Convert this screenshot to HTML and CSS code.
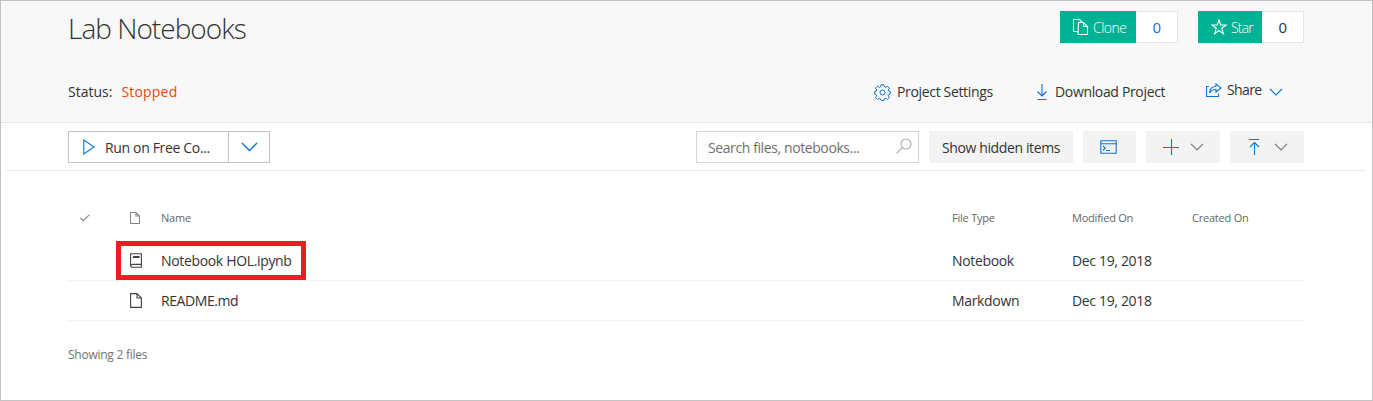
FILE: index.html
```html
<!DOCTYPE html>
<html lang="en">
<head>
<meta charset="utf-8">
<title>Lab Notebooks</title>
<link rel="stylesheet" href="styles.css">
</head>
<body>
<div class="page">
  <header class="header">
    <div class="title-row">
      <h1 class="title"><span>Lab Notebooks</span></h1>
      <div class="counter clone">
        <button class="counter-action"><svg width="16" height="17" viewBox="0 0 16 17"><path d="M4.500 12.500h-4v-12h6l3 3M5.500 3.500h5l4 4v8h-9.500zM10.500 3.500v4h4"/></svg><span>Clone</span></button>
        <span class="counter-value link">0</span>
      </div>
      <div class="counter star">
        <button class="counter-action"><svg width="16" height="16" viewBox="0 0 16 16"><path d="M8 1l1.700 5h5.300l-4.200 3.300 1.600 5.500L8 11.500l-4.400 3.300 1.600-5.500L1 6h5.300z"/></svg><span>Star</span></button>
        <span class="counter-value">0</span>
      </div>
    </div>
    <div class="status-row">
      <div class="status"><span class="status-label">Status:</span><span class="status-value">Stopped</span></div>
      <a class="action settings"><svg width="17" height="17" viewBox="0 0 17 17"><path d="M7 .8h3l.4 2 1.300.6 1.700-1.200 2 2-1.200 1.700.6 1.300 1.500.3v2.600l-1.500.4-.6 1.300 1.200 1.700-2 2-1.700-1.200-1.300.6-.4 1.500H7l-.4-1.500-1.300-.6-1.700 1.200-2-2 1.200-1.700-.6-1.300-1.500-.4V7.500l1.500-.3.600-1.300-1.200-1.700 2-2 1.700 1.200 1.300-.6z"/><circle cx="8.500" cy="8.500" r="2.500"/></svg><span>Project Settings</span></a>
      <a class="action download"><svg width="12" height="16" viewBox="0 0 12 16"><path d="M6 0v12M1.500 7.500L6 12l4.500-4.500M1.500 15.500h9"/></svg><span>Download Project</span></a>
      <a class="action share"><svg width="16" height="14" viewBox="0 0 16 14"><path d="M3 3.500H.5v10h12v-3M10 .8L15 5l-5 4V6.500C7 6.500 5 7.500 3.500 10c.3-3.800 2.500-6.400 6.500-6.700z"/></svg><span>Share</span><svg class="share-chevron" width="14" height="9" viewBox="0 0 14 9"><path d="M1 1l6 6 6-6"/></svg></a>
    </div>
  </header>

  <div class="toolbar">
    <div class="run">
      <button class="run-main"><svg width="12" height="16" viewBox="0 0 12 16"><path d="M.8 1v14L11 8z"/></svg><span>Run on Free Co...</span></button>
      <button class="run-menu"><svg width="17" height="10" viewBox="0 0 17 10"><path d="M1 1l7.500 7.500L16 1"/></svg></button>
    </div>
    <div class="search"><span>Search files, notebooks...</span><svg width="16" height="16" viewBox="0 0 16 16"><circle cx="10" cy="6" r="5"/><path d="M6.300 9.700L.7 15.300"/></svg></div>
    <button class="tool hidden-items"><span>Show hidden items</span></button>
    <button class="tool terminal"><svg width="17" height="14" viewBox="0 0 17 14"><path d="M.8.8h15.400v12.400H.8zM1 3.800h15M3 6l2.300 2.200L3 10.500M6 10.500h4"/></svg></button>
    <button class="tool split"><svg width="16" height="16" viewBox="0 0 16 16"><path d="M8.500 0v16M0 8.500h16"/></svg><svg class="chevron" width="14" height="8" viewBox="0 0 14 8"><path d="M1 .8l6 6 6-6"/></svg></button>
    <button class="tool split upload"><svg width="12" height="16" viewBox="0 0 12 16"><path d="M1 .5h10M6.500 16V3.500M2 8l4.500-4.500L11 8"/></svg><svg class="chevron" width="14" height="8" viewBox="0 0 14 8"><path d="M1 .8l6 6 6-6"/></svg></button>
  </div>

  <main class="files">
    <div class="row row-head">
      <span class="check"><svg width="10" height="8" viewBox="0 0 10 8"><path d="M.5 4l2.700 2.700L9.500.6"/></svg></span>
      <span class="icon"><svg width="10" height="12" viewBox="0 0 10 12"><path d="M.5.5h5.500l3.500 3.500v7.500h-9zM6 .5V4h3.500"/></svg></span>
      <span class="cell">Name</span><span class="cell">File Type</span><span class="cell">Modified On</span><span class="cell">Created On</span>
    </div>
    <div class="row">
      <span></span>
      <span class="icon"><svg width="12" height="15" viewBox="0 0 12 15"><path d="M.6 12.500V.700h10.800v13.600H2.500Q.6 14.300.6 12.500 .8 11.400 2.500 11.400h9M3.500 3.500h5.500v1H3.500z"/></svg></span>
      <span class="cell">Notebook HOL.ipynb</span><span class="cell">Notebook</span><span class="cell">Dec 19, 2018</span><span></span>
      <span class="highlight"></span>
    </div>
    <div class="row">
      <span></span>
      <span class="icon"><svg width="12" height="15" viewBox="0 0 12 15"><path d="M.6.600h6.400l4.400 4.400v9.400H.6zM7 .6V5h4.400"/></svg></span>
      <span class="cell readme">README.md</span><span class="cell">Markdown</span><span class="cell">Dec 19, 2018</span><span></span>
    </div>
    <p class="summary"><span>Showing 2 files</span></p>
  </main>
</div>
</body>
</html>
```
FILE: styles.css
```css
* { box-sizing: border-box; }
body { margin: 0; font: 14px/20px "Open Sans", "Noto Sans", sans-serif; color: #333; letter-spacing: -0.34px; }
button { font: inherit; color: inherit; letter-spacing: inherit; border: 0; padding: 0; margin: 0; background: none; }
svg { display: block; flex: none; fill: none; stroke: #0f74d6; stroke-width: 1.1; }
span { white-space: nowrap; }
.page { width: 1373px; height: 401px; border: 1px solid #c3c3c3; background: #fff; overflow: hidden; }

.header { height: 122px; padding: 10px 68px 0 67px; background: #f8f8f8; border-bottom: 1px solid #e6e6e6; }
.title-row { display: flex; height: 32px; }
.title { flex: 1; margin: 0; font-size: 28px; line-height: 35px; font-weight: 300; letter-spacing: -0.98px; }
.counter { display: flex; }
.counter-action { display: flex; align-items: center; gap: 4px; background: #00b294; color: #fff; font-weight: 300; letter-spacing: -0.5px; }
.counter-action svg { stroke: #fff; }
.counter-action span { padding-top: 2px; }
.counter-value { width: 42px; border: 1px solid #e6e6e6; border-left: 0; background: #fff; text-align: center; font-size: 15px; line-height: 31px; }
.clone .counter-action { width: 76px; padding-left: 13px; }
.star { margin-left: 20px; }
.star .counter-action { width: 64px; padding-left: 13px; letter-spacing: -0.8px; }
.link { color: #0f74d6; }

.status-row { display: flex; align-items: center; height: 32px; margin-top: 32px; padding-top: 2px; }
.status { flex: 1; display: flex; gap: 9px; letter-spacing: 0; }
.status-value { color: #e8470f; letter-spacing: 0.2px; }
.action { display: flex; align-items: center; gap: 6px; }
.settings { width: 162px; }
.settings svg { stroke-width: 1; }
.download { width: 170px; gap: 7px; }
.share { width: 98px; margin-top: -4px; letter-spacing: -0.6px; }
.share svg:first-child { margin-right: -1px; }
.share-chevron { margin: 4px 0 0 1px; }

.toolbar { display: flex; height: 48px; margin: 0 6px 0 5px; padding: 8px 62px 0; border-bottom: 1px solid #e9e9e9; }
.run { display: flex; width: 202px; height: 32px; margin-right: auto; border: 1px solid #c3c3c3; }
.run-main { display: flex; align-items: center; gap: 10px; width: 160px; padding-left: 14px; border-right: 1px solid #c3c3c3; }
.run-main span, .hidden-items span { padding-top: 2px; }
.run-menu { flex: 1; display: flex; align-items: center; justify-content: center; }
.run-menu svg { stroke-width: 1.4; }
.search { display: flex; justify-content: space-between; width: 223px; height: 32px; padding: 6px 6px 0 11px; border: 1px solid #d5d5d5; color: #707070; letter-spacing: -0.4px; }
.search svg { stroke: #aaa; }
.tool { height: 32px; margin-left: 10px; background: #f3f3f3; display: flex; align-items: center; justify-content: center; }
.hidden-items { width: 144px; letter-spacing: -0.37px; }
.terminal { width: 53px; }
.terminal svg { margin-right: 2px; }
.split { width: 74px; gap: 11px; padding-left: 1px; }
.upload { gap: 14px; }
.chevron { stroke: #777; stroke-width: 1.2; }

.files { padding: 27px 68px 0 67px; }
.row { position: relative; display: grid; grid-template-columns: 62px 31px 791px 120px 120px 1fr; align-items: center; height: 40px; border-bottom: 1px solid #f1f1f1; }
.row-head { height: 43px; padding-bottom: 3px; border-bottom: 0; font-size: 11px; color: #666; letter-spacing: -0.22px; }
.check { padding-left: 12px; }
.check svg { stroke: #888; }
.row .icon svg { stroke: #444; }
.row-head .icon svg { stroke: #888; }
.readme { letter-spacing: -0.42px; }
.highlight { position: absolute; left: 48px; top: 0; width: 190px; height: 39px; border: 5px solid #ed1c24; }
.summary { margin: 24px 0 0; font-size: 12px; color: #737373; letter-spacing: -0.25px; }
```
